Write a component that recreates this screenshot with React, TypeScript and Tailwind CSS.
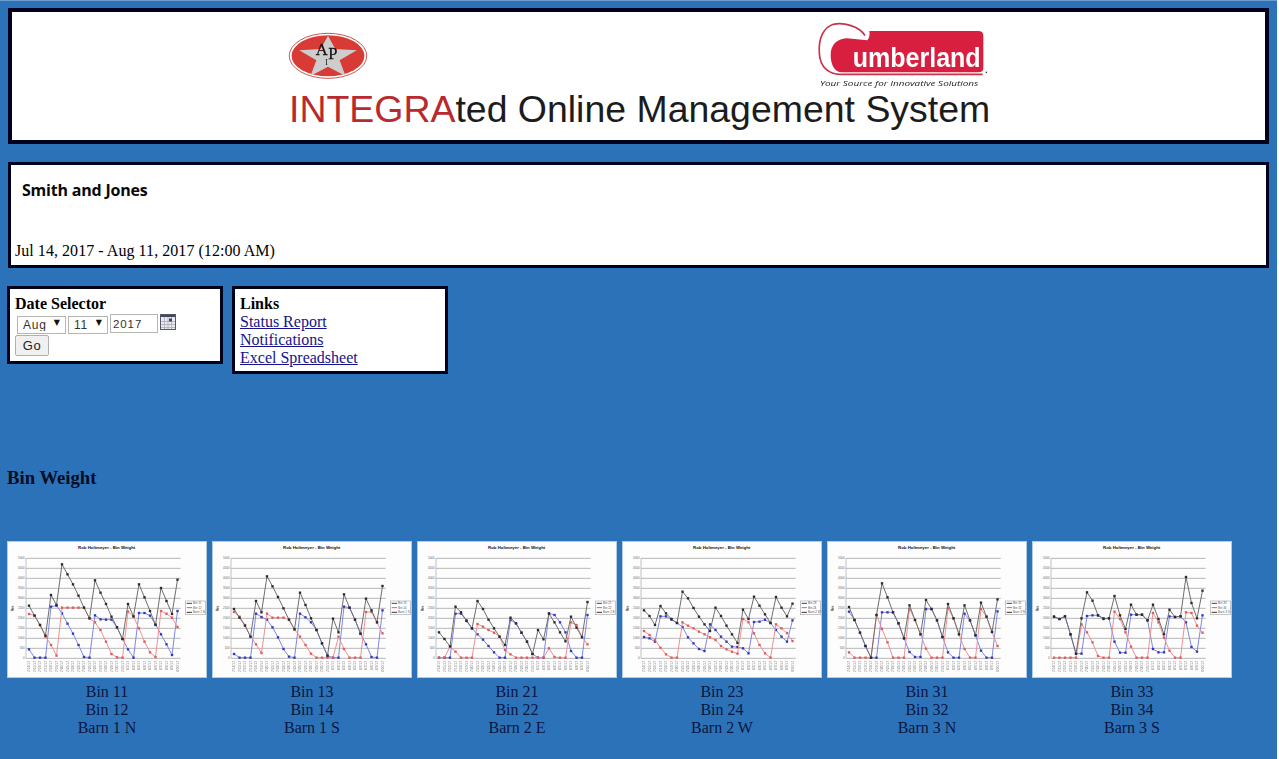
import React from 'react';

const serif = "font-['Liberation_Serif',serif]";

const dates = [
    '7/14/17', '7/15/17', '7/16/17', '7/17/17', '7/18/17', '7/19/17', '7/20/17', '7/21/17', '7/22/17', '7/23/17',
    '7/24/17', '7/25/17', '7/26/17', '7/27/17', '7/28/17', '7/29/17', '7/30/17', '7/31/17', '8/1/17', '8/2/17',
    '8/3/17', '8/4/17', '8/5/17', '8/6/17', '8/7/17', '8/8/17', '8/9/17', '8/10/17',
];

type Bin = {
    lines: [string, string, string];
    blue: number[];
    red: number[];
    black: number[];
};

const bins: Bin[] = [
    {
        lines: ['Bin 11', 'Bin 12', 'Barn 1 N'],
        blue: [343, 368, 368, 368, 215, 212, 235, 266, 296, 330, 366, 368, 241, 253, 254, 254, 277, 312, 343, 368, 234, 234, 242, 268, 298, 328, 360, 228],
        red: [237, 241, 270, 305, 330, 362, 218, 218, 218, 218, 218, 250, 262, 285, 320, 357, 367, 368, 230, 245, 280, 320, 352, 366, 228, 236, 248, 276],
        black: [212, 242, 270, 302, 180, 210, 88, 118, 148, 182, 218, 250, 136, 173, 207, 245, 277, 312, 207, 244, 148, 187, 228, 270, 159, 198, 237, 134],
    },
    {
        lines: ['Bin 13', 'Bin 14', 'Barn 1 S'],
        blue: [357, 368, 368, 368, 236, 246, 254, 277, 307, 342, 365, 368, 236, 247, 262, 285, 325, 362, 368, 368, 215, 218, 254, 296, 328, 366, 368, 226],
        red: [231, 245, 270, 305, 328, 354, 236, 248, 248, 248, 254, 283, 305, 330, 356, 368, 368, 368, 368, 305, 342, 368, 368, 368, 231, 231, 262, 295],
        black: [222, 248, 272, 305, 198, 232, 124, 154, 186, 220, 254, 283, 173, 210, 250, 285, 325, 362, 251, 292, 178, 218, 254, 296, 191, 226, 262, 153],
    },
    {
        lines: ['Bin 21', 'Bin 22', 'Barn 2 E'],
        blue: [368, 368, 368, 236, 236, 256, 280, 298, 314, 333, 352, 368, 368, 255, 265, 293, 320, 357, 368, 368, 235, 240, 262, 292, 348, 368, 368, 240],
        red: [368, 368, 335, 350, 368, 368, 368, 267, 275, 285, 293, 305, 345, 358, 368, 368, 368, 368, 368, 368, 340, 366, 368, 368, 262, 270, 305, 328],
        black: [292, 312, 334, 215, 232, 258, 280, 198, 222, 254, 280, 305, 330, 248, 265, 293, 320, 357, 285, 313, 236, 262, 292, 319, 245, 278, 307, 201],
    },
    {
        lines: ['Bin 23', 'Bin 24', 'Barn 2 W'],
        blue: [306, 310, 320, 244, 244, 254, 264, 276, 307, 325, 342, 348, 268, 285, 305, 320, 335, 336, 340, 355, 261, 260, 254, 264, 285, 305, 320, 256],
        red: [288, 300, 315, 338, 358, 368, 368, 262, 272, 280, 290, 298, 307, 315, 333, 343, 350, 356, 252, 262, 295, 330, 355, 368, 268, 280, 294, 318],
        black: [226, 243, 270, 213, 235, 252, 264, 170, 190, 219, 245, 268, 288, 218, 243, 272, 298, 324, 224, 252, 185, 212, 238, 264, 186, 218, 244, 206],
    },
    {
        lines: ['Bin 31', 'Bin 32', 'Barn 3 N'],
        blue: [230, 255, 293, 333, 368, 368, 232, 232, 232, 265, 310, 351, 366, 366, 222, 222, 256, 306, 352, 368, 368, 236, 256, 301, 347, 368, 368, 229],
        red: [352, 368, 368, 368, 368, 240, 282, 322, 368, 368, 368, 222, 255, 298, 341, 368, 368, 368, 220, 250, 298, 342, 368, 368, 222, 245, 291, 333],
        black: [216, 255, 293, 333, 368, 240, 145, 187, 232, 265, 310, 211, 255, 298, 195, 222, 256, 306, 207, 250, 298, 211, 256, 301, 203, 245, 291, 193],
    },
    {
        lines: ['Bin 33', 'Bin 34', 'Barn 3 S'],
        blue: [245, 252, 244, 298, 356, 356, 243, 241, 241, 250, 250, 320, 353, 353, 239, 239, 239, 256, 342, 352, 352, 244, 246, 244, 262, 336, 350, 241],
        red: [368, 368, 368, 368, 368, 268, 292, 322, 363, 368, 368, 230, 252, 292, 335, 368, 368, 368, 234, 262, 308, 347, 368, 368, 232, 234, 272, 293],
        black: [245, 252, 244, 298, 356, 250, 172, 197, 241, 252, 250, 183, 241, 282, 209, 239, 239, 256, 209, 252, 298, 224, 246, 244, 126, 204, 250, 167],
    },
];

function Series({values, line, dot}: {values: number[]; line: string; dot: string}) {
    const points = values.map((y, i) => `${87 + i * 16.5},${y}`).join(' ');
    return (
        <g>
            <polyline points={points} fill="none" stroke={line} strokeWidth="3"/>
            {values.map((y, i) => (
                <rect key={i} x={83.5 + i * 16.5} y={y - 3.5} width="7" height="7" fill={dot}/>
            ))}
        </g>
    );
}

function BinChart({bin}: {bin: Bin}) {
    return (
        <svg viewBox="21 18 600 411" className="block w-[200px] h-[137px] blur-[0.6px]">
            <rect x="21" y="18" width="600" height="411" fill="#fdfdfd" stroke="#b4cbe0" strokeWidth="6"/>
            <text x="320" y="41" textAnchor="middle" fontSize="13" fontWeight="700" fontFamily="Liberation Sans, sans-serif" fill="#111">
                Rob Holtmeyer - Bin Weight
            </text>
            {[0, 1, 2, 3, 4, 5, 6, 7, 8, 9, 10].map((n) => (
                <g key={n}>
                    <line x1="78" x2="542" y1={70 + n * 30} y2={70 + n * 30} stroke="#a8a8a8" strokeWidth="2.5"/>
                    <text x="74" y={73 + n * 30} textAnchor="end" fontSize="9" fontFamily="Liberation Sans, sans-serif" fill="#666">
                        {(10 - n) * 500}
                    </text>
                </g>
            ))}
            <line x1="78" x2="78" y1="70" y2="370" stroke="#a8a8a8" strokeWidth="2"/>
            <text transform="translate(41 220) rotate(-90)" textAnchor="middle" fontSize="11" fontWeight="700" fontFamily="Liberation Sans, sans-serif" fill="#222">
                lbs
            </text>
            {dates.map((d, i) => (
                <text key={d} transform={`translate(${90 + i * 16.5} 378) rotate(-90)`} textAnchor="end" fontSize="10" fontFamily="Liberation Sans, sans-serif" fill="#888">
                    {d}
                </text>
            ))}
            <Series values={bin.blue} line="#7f87ea" dot="#3438b8"/>
            <Series values={bin.red} line="#f29090" dot="#e25a5a"/>
            <Series values={bin.black} line="#6e6e6e" dot="#2a2a2a"/>
            <rect x="556" y="198" width="60" height="41" fill="#fff" stroke="#aaa" strokeWidth="2"/>
            {[
                {c: '#3438b8', y: 205, t: bin.lines[0]},
                {c: '#e25a5a', y: 218, t: bin.lines[1]},
                {c: '#333333', y: 232, t: bin.lines[2]},
            ].map((row) => (
                <g key={row.y}>
                    <line x1="560" x2="576" y1={row.y} y2={row.y} stroke={row.c} strokeWidth="3"/>
                    <text x="579" y={row.y + 3} fontSize="9" fontFamily="Liberation Sans, sans-serif" fill="#555">{row.t}</text>
                </g>
            ))}
        </svg>
    );
}

function ApiLogo() {
    return (
        <svg viewBox="25 35 240 145" className="block w-[80px] h-[48px] blur-[0.3px]">
            <ellipse cx="145" cy="107" rx="117" ry="68" fill="#fff" stroke="#c9544f" strokeWidth="3"/>
            <ellipse cx="145" cy="107" rx="110" ry="62" fill="#d83a36"/>
            <polygon points="145,46 167,86 232,90 180,120 198,168 145,140 92,168 110,120 58,90 123,86" fill="#cdcdcd"/>
            <text x="108" y="104" fontSize="50" stroke="#111" strokeWidth="0.8" fontFamily="Liberation Serif, serif" fill="#111">A</text>
            <text x="146" y="116" fontSize="50" stroke="#111" strokeWidth="0.8" fontFamily="Liberation Serif, serif" fill="#111">P</text>
            <text x="137" y="134" fontSize="24" fontFamily="Liberation Serif, serif" fill="#111">I</text>
        </svg>
    );
}

function CumberlandLogo() {
    return (
        <svg viewBox="0 0 570 240" className="block w-[190px] h-[80px] blur-[0.3px]">
            <path d="M165 62 C150 35 100 20 70 28 C40 38 25 70 28 115 C30 160 60 178 90 178 L518 178" fill="none" stroke="#c8324a" strokeWidth="5"/>
            <path d="M178 48 L505 48 Q520 48 520 63 L520 160 Q520 172 505 172 L95 172 C75 172 62 150 62 120 C62 90 80 72 110 70 L172 76 C178 70 180 58 178 48 Z" fill="#d81f3f"/>
            <text x="128" y="157" fontSize="82" fontWeight="700" textLength="384" lengthAdjust="spacingAndGlyphs" fontFamily="Liberation Sans, sans-serif" fill="#fff">
                umberland
            </text>
            <text x="30" y="212" fontSize="24" fontStyle="italic" textLength="475" lengthAdjust="spacingAndGlyphs" fontFamily="Open Sans, sans-serif" fill="#222">
                Your Source for Innovative Solutions
            </text>
            <rect x="527" y="170" width="4" height="4" fill="#333"/>
        </svg>
    );
}

function CalendarIcon() {
    return (
        <svg viewBox="0 0 16 16" className="block w-4 h-4 mt-[-1px]">
            <rect x="0.5" y="0.5" width="15" height="15" fill="#e9e9ee" stroke="#55566a"/>
            <rect x="1" y="1" width="14" height="2" fill="#45465c"/>
            <path d="M1 7.5h14M1 10.5h14M1 13.5h14M4.5 3v12M8 3v12M11.5 3v12" stroke="#b5b6c4" strokeWidth="1"/>
            <rect x="9" y="4.5" width="3" height="3" fill="#45465c"/>
        </svg>
    );
}

function Dropdown({value, width}: {value: string; width: string}) {
    return (
        <div className={`relative ${width} h-[18px]`}>
            <select
                defaultValue={value}
                className="appearance-none w-full h-full border border-[#b5b5b5] bg-white pl-[5px] text-[12px] tracking-[0.8px] text-[#333] leading-none font-['Liberation_Sans',sans-serif] rounded-none"
            >
                <option value={value}>{value}</option>
            </select>
            <span className="absolute right-[6px] top-[2px] text-[8px] leading-[12px] text-[#111] font-['DejaVu_Sans',sans-serif]">▼</span>
        </div>
    );
}

export default function App() {
    return (
        <div className="w-[1279px] h-[759px] overflow-hidden bg-white">
            <div className={`w-[1277px] h-[759px] overflow-hidden bg-[#2c72b8] border-t border-[#6c9ccd] ${serif} text-[16px] leading-[18px] text-black`}>
                <div className="ml-2 mt-[7px] w-[1261px] h-[136px] border-4 border-[#01011c] bg-white">
                    <div className="w-[702px] ml-[277px]">
                        <div className="flex justify-between items-start h-[66px]">
                            <div className="mt-[20px] ml-[-1px]"><ApiLogo/></div>
                            <div className="mt-[3px] mr-[-9px]"><CumberlandLogo/></div>
                        </div>
                        <h1 className="mt-[11px] text-[37.45px] leading-[40px] whitespace-nowrap font-['Liberation_Sans',sans-serif] font-normal text-[#1c1c1c]">
                            <span className="text-[#b82a2e]">INTEGRA</span>ted Online Management System
                        </h1>
                    </div>
                </div>

                <div className="ml-2 mt-[18px] w-[1261px] h-[106px] border-[3px] border-[#01011c] bg-white pt-[15px] pl-[4px]">
                    <div className="ml-[7px] text-[16px] leading-[20px] font-bold font-['Open_Sans',sans-serif] tracking-[-0.2px] text-[#0a0a0a]">Smith and Jones</div>
                    <div className="mt-[42px] tracking-[0.05px]">Jul 14, 2017 - Aug 11, 2017 (12:00 AM)</div>
                </div>

                <div className="ml-[7px] mt-[18px] flex items-start gap-[9px]">
                    <div className="w-[216px] h-[78px] border-[3px] border-[#01011c] bg-white pl-[5px] pt-[6px]">
                        <div className="font-bold">Date Selector</div>
                        <div className="flex items-start gap-[2px] ml-[2px] mt-[2px]">
                            <Dropdown value="Aug" width="w-[49px]"/>
                            <Dropdown value="11" width="w-[40px]"/>
                            <input
                                readOnly
                                value="2017"
                                className="w-[48px] h-[19px] mt-[-1px] border border-[#b5b5b5] bg-white px-[2px] text-[11.5px] tracking-[0.9px] text-[#333] font-['Liberation_Sans',sans-serif]"
                            />
                            <CalendarIcon/>
                        </div>
                        <button className="block mt-[2px] w-[34px] h-[21px] border border-[#b0b0b0] rounded-[2px] bg-[#f0f0f0] text-[13px] leading-none tracking-[0.5px] text-[#222] font-['Liberation_Sans',sans-serif]">
                            Go
                        </button>
                    </div>

                    <div className="w-[216px] h-[88px] border-[3px] border-[#01011c] bg-white pl-[5px] pt-[6px]">
                        <div className="font-bold">Links</div>
                        <a href="#" className="block underline text-[#14128c]">Status Report</a>
                        <a href="#" className="block underline text-[#14128c]">Notifications</a>
                        <a href="#" className="block underline text-[#14128c]">Excel Spreadsheet</a>
                    </div>
                </div>

                <h3 className="ml-[7px] mt-[93px] text-[18.7px] leading-[22px] font-bold text-[#050d24]">Bin Weight</h3>

                <div className="ml-[7px] mt-[52px] flex gap-[5px]">
                    {bins.map((bin) => (
                        <div key={bin.lines[0]} className="w-[200px]">
                            <BinChart bin={bin}/>
                            <div className="mt-[5px] text-center text-[#0b1640]">
                                {bin.lines.map((line) => (
                                    <div key={line}>{line}</div>
                                ))}
                            </div>
                        </div>
                    ))}
                </div>
            </div>
        </div>
    );
}
